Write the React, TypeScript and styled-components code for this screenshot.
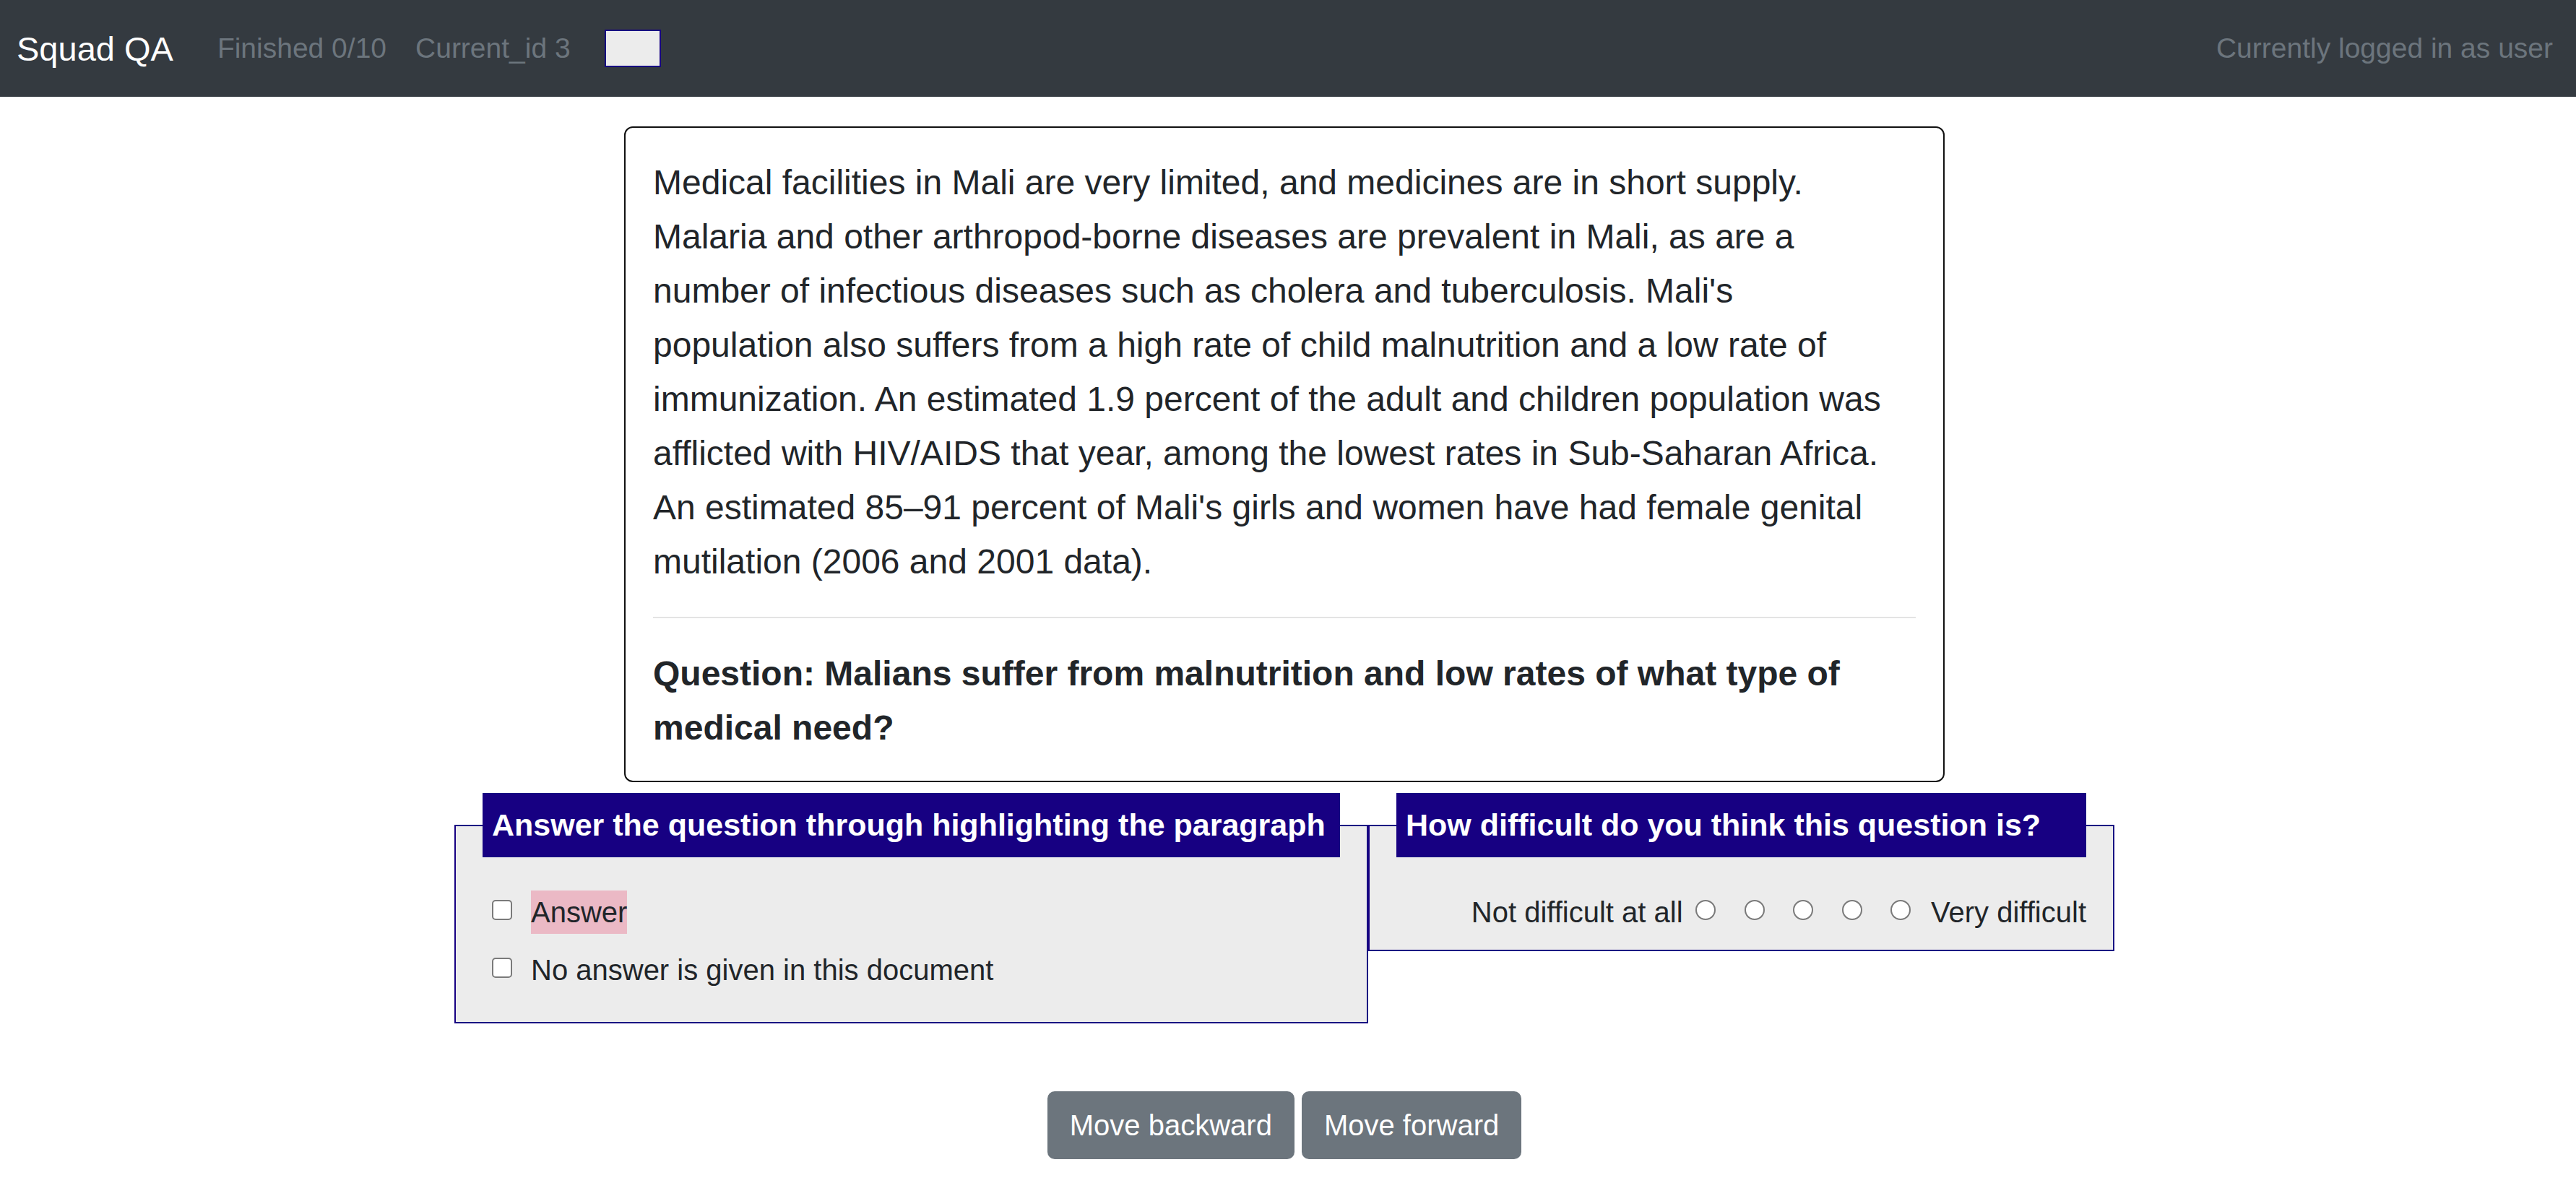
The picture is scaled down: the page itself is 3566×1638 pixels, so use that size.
import React from 'react';
import styled, { createGlobalStyle } from 'styled-components';

const GlobalStyle = createGlobalStyle`
  body {
    margin: 0;
    background: #fff;
    color: #212529;
    font-family: "Liberation Sans", Arial, sans-serif;
  }
`

const NAVY = '#170082';

const PASSAGE = [
  'Medical facilities in Mali are very limited, and medicines are in short supply.',
  'Malaria and other arthropod-borne diseases are prevalent in Mali, as are a',
  "number of infectious diseases such as cholera and tuberculosis. Mali's",
  'population also suffers from a high rate of child malnutrition and a low rate of',
  'immunization. An estimated 1.9 percent of the adult and children population was',
  'afflicted with HIV/AIDS that year, among the lowest rates in Sub-Saharan Africa.',
  "An estimated 85–91 percent of Mali's girls and women have had female genital",
  'mutilation (2006 and 2001 data).',
]

const Navbar = styled.nav`
  height: 134px;
  display: flex;
  align-items: center;
  padding: 0 32px 0 23px;
  background-color: #343a40;
`

const Brand = styled.span`
  font-size: 47px;
  line-height: 75px;
  color: #fff;
  margin-right: 41px;
`

const NavText = styled.span<{ $right?: boolean }>`
  font-size: 39px;
  line-height: 60px;
  color: #6c757d;
  padding: ${p => (p.$right ? '0' : '0 20px')};
  margin-left: ${p => (p.$right ? 'auto' : '0')};
`

const ColorBox = styled.div`
  width: 78px;
  height: 52px;
  box-sizing: border-box;
  margin-left: 27px;
  border: 2px solid ${NAVY};
  background-color: #ececec;
`

const Main = styled.main`
  display: flex;
  flex-direction: column;
  align-items: center;
  padding: 41px 10px 0 0;
`

const Card = styled.section`
  width: 1828px;
  box-sizing: border-box;
  border: 2px solid #111;
  border-radius: 12px;
  padding: 38px 38px 36px;
  font-size: 48px;
  line-height: 75px;
`

const Paragraph = styled.p`
  margin: 0 0 39px;
`

const Line = styled.span`
  display: block;
  white-space: nowrap;
`

const Divider = styled.hr`
  margin: 0 0 39px;
  border: 0;
  border-top: 2px solid #e3e3e3;
`

const Question = styled.p`
  margin: 0;
  font-weight: 700;
`

const PanelRow = styled.div`
  display: flex;
  align-items: flex-start;
  margin-top: 15px;
`

const Panel = styled.fieldset<{ $width: number }>`
  width: ${p => p.$width}px;
  min-width: 0;
  box-sizing: border-box;
  margin: 0;
  padding: 46px 37px 22px;
  border: 2px solid ${NAVY};
  background-color: #ececec;
`

const Legend = styled.legend`
  width: 100%;
  box-sizing: border-box;
  margin: 0;
  padding: 12px 13px;
  background-color: ${NAVY};
  color: #fff;
  font-size: 43px;
  font-weight: 700;
  line-height: 65px;
  white-space: nowrap;
`

const CheckRow = styled.label`
  display: flex;
  align-items: center;
  height: 60px;
  margin-bottom: 20px;
  font-size: 40px;
  line-height: 60px;
`

const Box = styled.span<{ $round?: boolean }>`
  flex: none;
  width: 28px;
  height: 28px;
  box-sizing: border-box;
  margin-bottom: 6px;
  border: 2px solid #7a7a7a;
  border-radius: ${p => (p.$round ? '50%' : '5px')};
  background-color: #fff;
`

const CheckBox = styled(Box)`
  margin-left: 13px;
  margin-right: 26px;
`

const Highlight = styled.span`
  background-color: #ebb9c5;
`

const ScaleRow = styled.div`
  display: flex;
  align-items: center;
  justify-content: flex-end;
  height: 60px;
  font-size: 40px;
  line-height: 60px;
`

const Radio = styled(Box)`
  margin-left: 17.5px;
  margin-right: 22px;
`

const EndLabel = styled.span`
  margin-left: 6px;
`

const Buttons = styled.div`
  display: flex;
  gap: 10px;
  margin-top: 94px;
`

const Button = styled.button`
  padding: 15px 29px;
  border: 2px solid #6c757d;
  border-radius: 10px;
  background-color: #6c757d;
  color: #fff;
  font-family: inherit;
  font-size: 40px;
  line-height: 60px;
  cursor: pointer;
`

const App: React.FunctionComponent = () => (
  <>
    <GlobalStyle />
    <Navbar>
      <Brand>Squad QA</Brand>
      <NavText>Finished 0/10</NavText>
      <NavText>Current_id 3</NavText>
      <ColorBox />
      <NavText $right>Currently logged in as user</NavText>
    </Navbar>
    <Main>
      <Card>
        <Paragraph>
          {PASSAGE.map(line => (
            <Line key={line}>{line}</Line>
          ))}
        </Paragraph>
        <Divider />
        <Question>
          Question: Malians suffer from malnutrition and low rates of what type of medical need?
        </Question>
      </Card>
      <PanelRow>
        <Panel $width={1265}>
          <Legend>Answer the question through highlighting the paragraph</Legend>
          <CheckRow>
            <CheckBox />
            <Highlight>Answer</Highlight>
          </CheckRow>
          <CheckRow>
            <CheckBox />
            No answer is given in this document
          </CheckRow>
        </Panel>
        <Panel $width={1033}>
          <Legend>How difficult do you think this question is?</Legend>
          <ScaleRow>
            Not difficult at all
            {[1, 2, 3, 4, 5].map(n => (
              <Radio key={n} $round />
            ))}
            <EndLabel>Very difficult</EndLabel>
          </ScaleRow>
        </Panel>
      </PanelRow>
      <Buttons>
        <Button>Move backward</Button>
        <Button>Move forward</Button>
      </Buttons>
    </Main>
  </>
)

export default App;
